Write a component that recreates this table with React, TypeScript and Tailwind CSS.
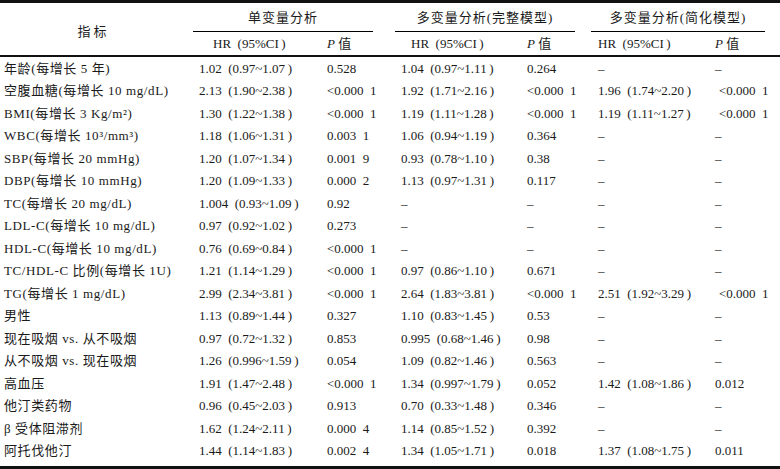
import React from "react";

type Row = [string, string, string, string, string, string, string];

const rows: Row[] = [
  ["年龄(每增长 5 年)", "1.02 (0.97~1.07)", "0.528", "1.04 (0.97~1.11)", "0.264", "–", "–"],
  ["空腹血糖(每增长 10 mg/dL)", "2.13 (1.90~2.38)", "<0.000 1", "1.92 (1.71~2.16)", "<0.000 1", "1.96 (1.74~2.20)", "<0.000 1"],
  ["BMI(每增长 3 Kg/m²)", "1.30 (1.22~1.38)", "<0.000 1", "1.19 (1.11~1.28)", "<0.000 1", "1.19 (1.11~1.27)", "<0.000 1"],
  ["WBC(每增长 10³/mm³)", "1.18 (1.06~1.31)", "0.003 1", "1.06 (0.94~1.19)", "0.364", "–", "–"],
  ["SBP(每增长 20 mmHg)", "1.20 (1.07~1.34)", "0.001 9", "0.93 (0.78~1.10)", "0.38", "–", "–"],
  ["DBP(每增长 10 mmHg)", "1.20 (1.09~1.33)", "0.000 2", "1.13 (0.97~1.31)", "0.117", "–", "–"],
  ["TC(每增长 20 mg/dL)", "1.004 (0.93~1.09)", "0.92", "–", "–", "–", "–"],
  ["LDL-C(每增长 10 mg/dL)", "0.97 (0.92~1.02)", "0.273", "–", "–", "–", "–"],
  ["HDL-C(每增长 10 mg/dL)", "0.76 (0.69~0.84)", "<0.000 1", "–", "–", "–", "–"],
  ["TC/HDL-C 比例(每增长 1U)", "1.21 (1.14~1.29)", "<0.000 1", "0.97 (0.86~1.10)", "0.671", "–", "–"],
  ["TG(每增长 1 mg/dL)", "2.99 (2.34~3.81)", "<0.000 1", "2.64 (1.83~3.81)", "<0.000 1", "2.51 (1.92~3.29)", "<0.000 1"],
  ["男性", "1.13 (0.89~1.44)", "0.327", "1.10 (0.83~1.45)", "0.53", "–", "–"],
  ["现在吸烟 vs. 从不吸烟", "0.97 (0.72~1.32)", "0.853", "0.995 (0.68~1.46)", "0.98", "–", "–"],
  ["从不吸烟 vs. 现在吸烟", "1.26 (0.996~1.59)", "0.054", "1.09 (0.82~1.46)", "0.563", "–", "–"],
  ["高血压", "1.91 (1.47~2.48)", "<0.000 1", "1.34 (0.997~1.79)", "0.052", "1.42 (1.08~1.86)", "0.012"],
  ["他汀类药物", "0.96 (0.45~2.03)", "0.913", "0.70 (0.33~1.48)", "0.346", "–", "–"],
  ["β 受体阻滞剂", "1.62 (1.24~2.11)", "0.000 4", "1.14 (0.85~1.52)", "0.392", "–", "–"],
  ["阿托伐他汀", "1.44 (1.14~1.83)", "0.002 4", "1.34 (1.05~1.71)", "0.018", "1.37 (1.08~1.75)", "0.011"],
];

const fmtHR = (s: string) => s.replace(" (", "\u2002(").replace(")", "\u2009)");
const fmtP = (s: string) => s.replace(" ", "\u2002");

const grid = "grid grid-cols-[199px_128px_74px_126px_71px_117px_65px]";

export default function App() {
  return (
    <div className="w-[780px] h-[469px] bg-white text-[#1a1a1a] font-['Liberation_Serif','Noto_Sans_CJK_SC',serif] text-[13px] leading-none overflow-hidden">
      <div className="h-[3px] bg-[#111]" />
      <div className={`${grid} grid-rows-[29px_23px]`}>
        <div className="row-span-2 flex items-center justify-center pr-[12px] pt-[5px] tracking-[3px]">指标</div>
        <div className="col-span-2 ml-[-6px] mr-[28px] flex items-center justify-center border-b border-[#000] tracking-[1px]">单变量分析</div>
        <div className="col-span-2 ml-[-6px] mr-[23px] flex items-center justify-center border-b border-[#000] tracking-[1px]">多变量分析(完整模型)</div>
        <div className="col-span-2 ml-[-7px] mr-[15px] flex items-center justify-center border-b border-[#000] tracking-[1px]">多变量分析(简化模型)</div>
        <div className="flex items-center pl-[14px]">HR&#x2002;(95%CI&#x2009;)</div>
        <div className="flex items-center"><i>P</i>&nbsp;值</div>
        <div className="flex items-center pl-[10px]">HR&#x2002;(95%CI&#x2009;)</div>
        <div className="flex items-center"><i>P</i>&nbsp;值</div>
        <div className="flex items-center">HR&#x2002;(95%CI&#x2009;)</div>
        <div className="flex items-center"><i>P</i>&nbsp;值</div>
      </div>
      <div className="h-[2px] bg-[#111]" />
      <div className="flex flex-col">
        {rows.map((r, i) => (
          <div key={i} className={`${grid} h-[22.5px] items-center whitespace-nowrap`}>
            <div className="pl-[4px] tracking-[0.6px]">{r[0]}</div>
            <div>{fmtHR(r[1])}</div>
            <div>{fmtP(r[2])}</div>
            <div>{fmtHR(r[3])}</div>
            <div>{fmtP(r[4])}</div>
            <div>{fmtHR(r[5])}</div>
            <div className={r[6].startsWith("<") ? "pl-[4px]" : ""}>{fmtP(r[6])}</div>
          </div>
        ))}
      </div>
      <div className="h-[4px]" />
      <div className="h-[3px] bg-[#111]" />
    </div>
  );
}
